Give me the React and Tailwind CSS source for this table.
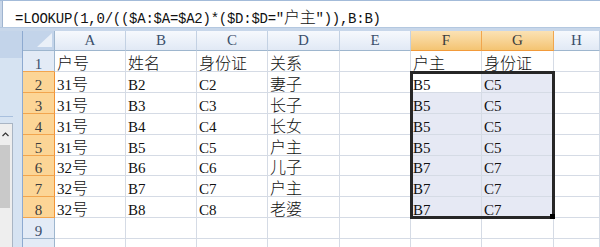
import React from "react";

const CJK = /([\u3000-\u9fff\uff00-\uffef]+)/;
function T({ t }) {
  return t.split(CJK).map((s, i) =>
    CJK.test(s) ? (
      <span key={i} className="inline-block leading-[14px] text-[16px] font-light font-['Noto_Sans_CJK_SC']">
        {s}
      </span>
    ) : (
      <React.Fragment key={i}>{s}</React.Fragment>
    )
  );
}

const COLS = ["A", "B", "C", "D", "E", "F", "G", "H"];
const W = {
  A: "w-[71px]",
  B: "w-[71px]",
  C: "w-[71px]",
  D: "w-[72px]",
  E: "w-[71px]",
  F: "w-[71px]",
  G: "w-[72px]",
  H: "w-[46px]",
};

const DATA = [
  ["户号", "姓名", "身份证", "关系", "", "户主", "身份证", ""],
  ["31号", "B2", "C2", "妻子", "", "B5", "C5", ""],
  ["31号", "B3", "C3", "长子", "", "B5", "C5", ""],
  ["31号", "B4", "C4", "长女", "", "B5", "C5", ""],
  ["31号", "B5", "C5", "户主", "", "B5", "C5", ""],
  ["32号", "B6", "C6", "儿子", "", "B7", "C7", ""],
  ["32号", "B7", "C7", "户主", "", "B7", "C7", ""],
  ["32号", "B8", "C8", "老婆", "", "B7", "C7", ""],
  ["", "", "", "", "", "", "", ""],
  ["", "", "", "", "", "", "", ""],
];
const H = ["h-[21px]", "h-[21px]", "h-[21px]", "h-[21px]", "h-[21px]", "h-[20px]", "h-[21px]", "h-[21px]", "h-[21px]", "h-[21px]"];

function ColHeader({ c }) {
  const sel = c === "F" || c === "G";
  return (
    <div
      className={`${W[c]} h-full flex items-center justify-center border-r border-b text-[15px] leading-[19px] ${
        sel
          ? "bg-linear-to-b from-[#fbe2b4] to-[#f4c472] border-r-[#f0a64e] border-b-[#f29a3a] text-[#3b3b3b]"
          : "bg-linear-to-b from-[#f6f9fd] to-[#e1e9f5] border-r-[#c3d1e3] border-b-[#9eb6ce] text-[#3b4f6b]"
      }`}
    >
      {c}
    </div>
  );
}

export default function App() {
  return (
    <div className="w-[600px] h-[247px] overflow-hidden bg-white flex flex-col font-['Liberation_Serif',serif]">
      {/* formula bar */}
      <div className="h-[27px] shrink-0 flex border-t border-[#a3bbd9]">
        <div className="w-[3px] bg-[#c9d7e9] border-r border-[#9fb4cf]" />
        <div className="flex-1 bg-white pl-[12px] pt-[8px] font-['Liberation_Mono',monospace] text-[14px] leading-[16px] tracking-[-0.25px] text-[#111] whitespace-nowrap">
          <T t={'=LOOKUP(1,0/(($A:$A=$A2)*($D:$D="户主")),B:B)'} />
        </div>
      </div>
      <div className="h-[4px] shrink-0 bg-[#c8d7ea] border-t border-[#b4c8e0]" />

      <div className="flex flex-1 min-h-0">
        {/* left pane */}
        <div className="w-[23px] shrink-0 flex flex-col border-r border-[#8eaad0]">
          <div className="h-[27px] bg-[#c3d4ea]" />
          <div className="flex flex-1">
            <div className="w-[13px] flex flex-col">
              <div className="h-[59px] bg-[#d6e3f2] border-b border-[#a9c0de]" />
              <div className="h-[6px] bg-[#d6e3f2]" />
              <div className="flex-1 flex flex-col bg-[#eeeeee] border-t border-r border-[#a9b5c4]">
                <div className="h-[21px] flex items-start justify-start pl-[2px] pt-[8px]">
                  <svg width="7" height="5" viewBox="0 0 7 5">
                    <polyline points="0.5,4 3.5,1 6.5,4" fill="none" stroke="#333" strokeWidth="1.2" />
                  </svg>
                </div>
                <div className="h-[63px] bg-[#c9c9c9] mr-[2px]" />
                <div className="flex-1" />
              </div>
            </div>
            <div className="flex-1 bg-[#d6e3f2]" />
          </div>
        </div>

        {/* grid */}
        <div className="relative w-[577px] shrink-0">
          <div className="flex h-[20px]">
            <div className="w-[32px] h-full bg-[#c3d4ea] border-r border-b border-[#9eb6ce] flex items-end justify-end pr-[2px] pb-[3px]">
              <svg width="15" height="14" viewBox="0 0 15 14">
                <polygon points="15,0 15,14 0,14" fill="#eaf0f8" />
              </svg>
            </div>
            {COLS.map((c) => (
              <ColHeader key={c} c={c} />
            ))}
          </div>

          {DATA.map((row, r) => {
            const sel = r >= 1 && r <= 7;
            return (
              <div key={r} className={`flex ${H[r]}`}>
                <div
                  className={`w-[32px] h-full flex items-end justify-center border-r border-b text-[15px] leading-[14px] ${
                    sel
                      ? "bg-[#fcd596] border-r-[#f29436] border-b-[#f2a54e] text-[#3d3d3d]"
                      : r === 0
                      ? "bg-[#e3ebf6] border-r-[#9eb6ce] border-b-[#f2a54e] text-[#3b4f6b]"
                      : "bg-[#e3ebf6] border-r-[#9eb6ce] border-b-[#9eb6ce] text-[#3b4f6b]"
                  }`}
                >
                  {r + 1}
                </div>
                {row.map((v, ci) => {
                  const c = COLS[ci];
                  const inSel = (c === "F" || c === "G") && r >= 1 && r <= 7 && !(c === "F" && r === 1);
                  return (
                    <div
                      key={ci}
                      className={`${W[c]} h-full flex items-end pl-[2px] border-r border-b border-[#d5dbe5] text-[15px] leading-[14px] text-[#111] whitespace-nowrap ${
                        inSel ? "bg-[#e6e9f4]" : "bg-white"
                      }`}
                    >
                      <span>
                        <T t={v} />
                      </span>
                    </div>
                  );
                })}
              </div>
            );
          })}

          {/* selection frame */}
          <div className="absolute left-[387px] top-[40px] w-[145px] h-[148px] border-[3px] border-[#262626] pointer-events-none">
            <div className="absolute right-[-3px] bottom-[-3px] w-[5px] h-[5px] bg-black" />
          </div>
        </div>
      </div>
    </div>
  );
}
